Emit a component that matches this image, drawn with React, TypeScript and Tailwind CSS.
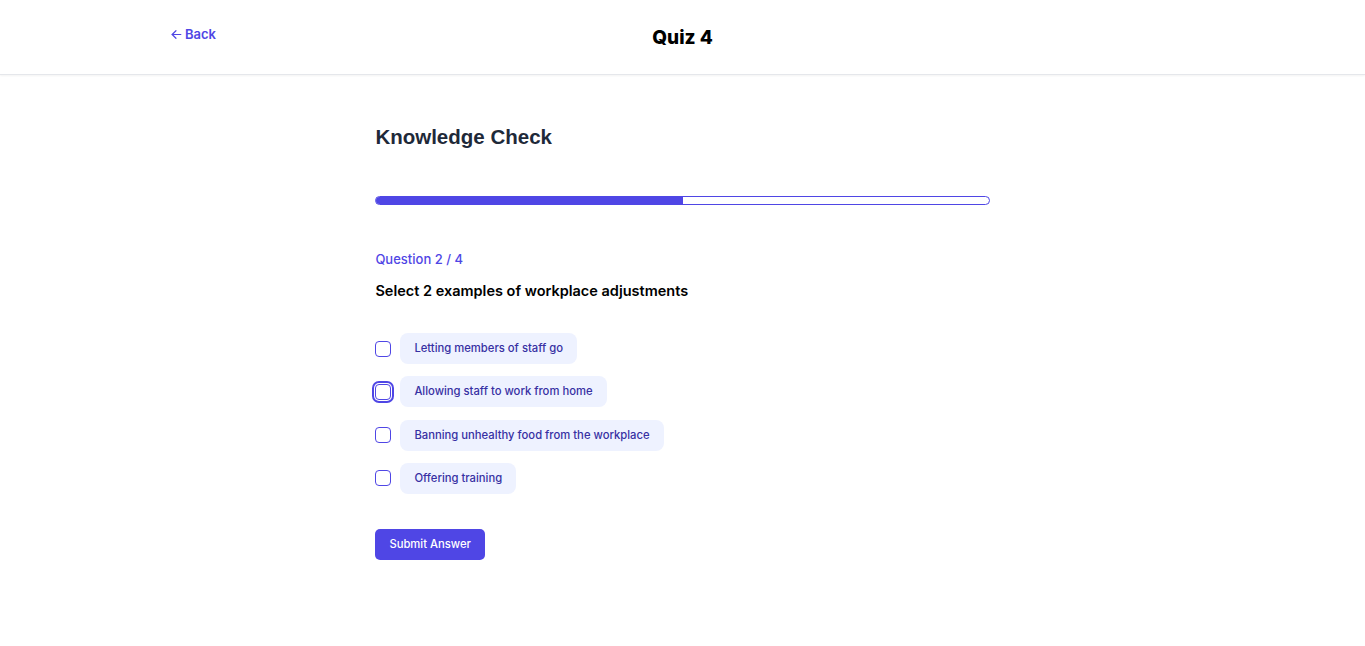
import { useState } from "react"

const options = [
    "Letting members of staff go",
    "Allowing staff to work from home",
    "Banning unhealthy food from the workplace",
    "Offering training",
]

export default function App() {
    const [checked, setChecked] = useState<boolean[]>([false, false, false, false])

    return (
        <div className="min-h-screen bg-white font-['Inter',sans-serif]">
            <header className="h-[75px] border-b border-gray-200 shadow-[0_1px_2px_rgba(0,0,0,0.05)]">
                <div className="relative flex h-full items-center justify-center">
                    <a href="#" className="absolute left-[170px] top-[25px] flex items-center gap-[2px] text-[13px] font-semibold text-[#4f46e5]">
                        <svg width="13" height="13" viewBox="0 0 24 24" fill="none" stroke="currentColor" strokeWidth="2.2" strokeLinecap="round" strokeLinejoin="round">
                            <path d="M20 12H4" />
                            <path d="M11 19l-7-7 7-7" />
                        </svg>
                        Back
                    </a>
                    <h1 className="pt-[2px] text-[19px] font-extrabold text-black">Quiz 4</h1>
                </div>
            </header>

            <main className="mx-auto w-[45%] pt-[47px]">
                <h2 className="font-['Liberation_Sans',sans-serif] text-[20.5px] font-bold text-gray-800">Knowledge Check</h2>

                <div className="mt-[43px] h-[9px] w-full overflow-hidden rounded-full border border-[#4f46e5]">
                    <div className="h-full w-1/2 bg-[#4f46e5]" />
                </div>

                <p className="mt-[45px] text-[13px] font-medium text-[#4f46e5]">Question 2 / 4</p>
                <p className="mt-[11px] text-[14.5px] font-semibold text-black">Select 2 examples of workplace adjustments</p>

                <div className="mt-[31px] flex flex-col gap-[12.3px]">
                    {options.map((label, i) => (
                        <label key={label} className="flex items-center gap-[9px]">
                            <input
                                type="checkbox"
                                checked={checked[i]}
                                onChange={() => setChecked(checked.map((c, j) => (j === i ? !c : c)))}
                                className={`h-4 w-4 appearance-none rounded-[4px] border border-[#4f46e5] bg-white ${i === 1 ? "ring-2 ring-[#4f46e5] ring-offset-1" : ""}`}
                            />
                            <span className="rounded-lg bg-[#eef2ff] px-[14px] py-[8px] text-[11.25px] leading-[15px] font-medium text-[#3730a3]">{label}</span>
                        </label>
                    ))}
                </div>

                <button type="button" className="mt-[35px] rounded-[5px] bg-[#4f46e5] px-[14px] py-[8px] text-[11.25px] leading-[15px] font-medium text-white">
                    Submit Answer
                </button>
            </main>
        </div>
    )
}
